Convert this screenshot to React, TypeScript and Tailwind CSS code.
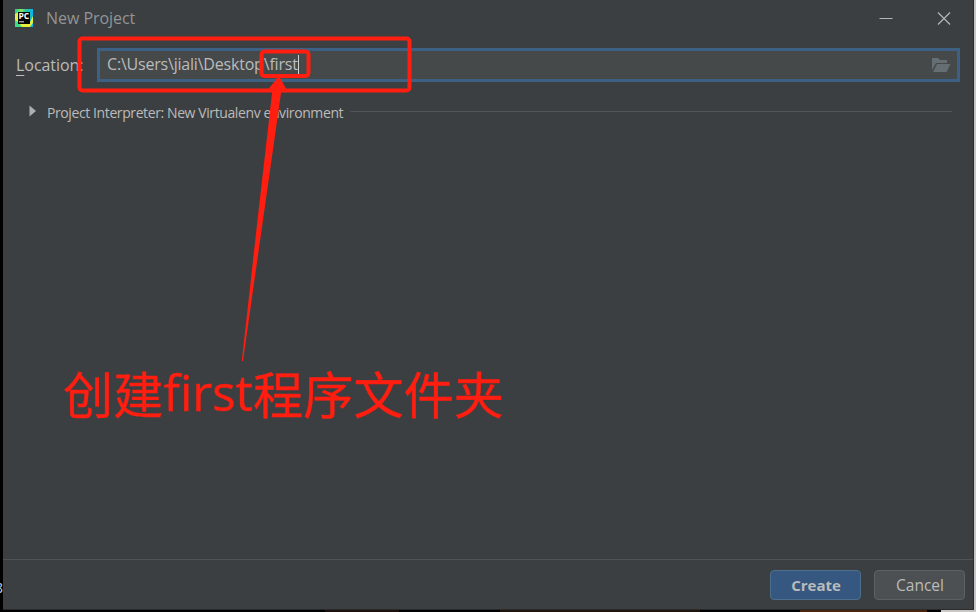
import React from "react";

function PyCharmLogo() {
  return (
    <svg width="18" height="18" viewBox="0 0 18 18" className="block shrink-0">
      <defs>
        <linearGradient id="pc" x1="0" y1="0" x2="1" y2="0">
          <stop offset="0" stopColor="#1fc98f" />
          <stop offset="0.35" stopColor="#8fe45c" />
          <stop offset="0.6" stopColor="#21c7a0" />
          <stop offset="1" stopColor="#07b4f0" />
        </linearGradient>
      </defs>
      <path d="M0 0H18V18H0Z" fill="url(#pc)" />
      <path d="M0 5L4 3V15H14L18 7V14L15 18H5L0 14Z" fill="#e6f03c" />
      <path d="M0 11L4 14L7 18H0Z" fill="#3ddc84" />
      <rect x="3" y="3" width="12" height="12" fill="#050505" />
      <text x="3.4" y="9.6" fontSize="8" fontWeight="700" fill="#fff" fontFamily="Open Sans, sans-serif" textLength="10.8" lengthAdjust="spacingAndGlyphs">PC</text>
      <rect x="4" y="12.3" width="5" height="1" fill="#ddd" />
    </svg>
  );
}

function Annotations() {
  return (
    <div className="pointer-events-none absolute inset-0 text-[#ff1e10]">
      <svg width="976" height="612" className="absolute inset-0" fill="none" stroke="currentColor">
        <rect x="79.5" y="38.5" width="330" height="52" rx="3" strokeWidth="4" />
        <rect x="261.5" y="51.5" width="47" height="24.5" rx="3" strokeWidth="4" />
        <path d="M279 76L286.5 89.5L281.3 91L263 220L243 361H241.8L257.5 220L272.3 91L268 89.5Z" fill="currentColor" stroke="none" />
      </svg>
      <p className="absolute left-[63px] top-[356px] flex h-[72px] items-center whitespace-nowrap font-['Noto_Sans_CJK_SC',sans-serif] text-[50.2px] leading-[72px] [-webkit-text-stroke:0.4px_#ff1e10]">
        <span>创建</span>
        <span className="font-['Open_Sans',sans-serif] text-[49px]">first</span>
        <span>程序文件夹</span>
      </p>
    </div>
  );
}

export default function App() {
  return (
    <div className="relative h-[612px] w-[976px] overflow-hidden bg-black font-['Open_Sans',sans-serif] text-[#bbbbbb]">
      <span className="absolute -left-[5px] top-[580px] text-[14px] leading-4 text-[#b9d8f2]">8</span>
      <div className="absolute right-0 top-0 h-full w-[3px] bg-[#c9c7c6]" />
      <div className="absolute bottom-0 left-[325px] h-[2px] w-[74px] bg-[#1c110c]" />
      <div className="absolute bottom-0 left-[500px] h-[2px] w-[200px] bg-[#21140b]" />
      <div className="absolute bottom-0 left-[800px] h-[2px] w-[127px] bg-[#4a240b]" />
      <div className="absolute bottom-0 right-0 h-[2px] w-[35px] bg-[#c9c7c6]" />
      <main className="relative ml-[3px] flex h-[610px] w-[971px] flex-col border-b border-r border-[#292b2c] bg-[#3c3f41]">
        <header className="flex h-9 items-center pl-3 pr-[21px]">
          <PyCharmLogo />
          <h1 className="ml-[13px] grow whitespace-nowrap text-[16px] leading-5 tracking-[-0.05px] text-[#929495]">New Project</h1>
          <svg width="74" height="18" className="block shrink-0" stroke="#b4b5b6" strokeWidth="1.2">
            <path d="M1.5 9.5H14.5M60 3.5L72 15.5M72 3.5L60 15.5" fill="none" />
          </svg>
        </header>
        <div className="mt-3 flex h-[34px] items-center pl-[13px]">
          <label className="w-[81px] whitespace-nowrap text-[16px] leading-5 tracking-[-0.05px]"><span className="underline decoration-1 underline-offset-4">L</span>ocation:</label>
          <div className="flex h-[34px] w-[863px] items-center border-[3px] border-[#3d6185] bg-[#45494a] pl-[7px] pr-[6px]">
            <span className="-mt-[2px] whitespace-nowrap text-[16px] leading-5 tracking-[-0.2px]">C:\Users\jiali\Desktop\first</span>
            <span className="-mt-[2px] h-[19px] w-px bg-[#d0d0d0]" />
            <svg width="20" height="16" viewBox="0 0 20 16" className="ml-auto block" fill="#656e73">
              <path d="M1 1H7L9 3H16V6H5L1 13Z" />
              <path d="M6 7H19.5L15.5 15H2Z" />
            </svg>
          </div>
        </div>
        <div className="mt-[19px] flex h-5 items-center pl-[26px] pr-[21px]">
          <svg width="8" height="12" className="block shrink-0" fill="#adb0b2"><path d="M0.5 .5L7 6L.5 11.5Z" /></svg>
          <span className="ml-[10px] mt-[3px] whitespace-nowrap text-[14px] leading-5 tracking-[-0.4px]">Project Interpreter: New Virtualenv environment</span>
          <span className="ml-[7px] h-px grow bg-[#515557]" />
        </div>
        <div className="grow" />
        <footer className="flex h-[50px] items-center justify-end gap-[13px] border-t border-[#515456] pr-[8px] pt-px text-[16px]">
          <button className="h-[30px] w-[91px] rounded-[4px] border border-[#4c708c] bg-[#365880] pl-px text-[15px] font-bold">Create</button>
          <button className="h-[30px] w-[91px] rounded-[4px] border border-[#5e6060] bg-[#4c5052] pl-px pt-px text-[15.5px]">Cancel</button>
        </footer>
      </main>
      <Annotations />
    </div>
  );
}
